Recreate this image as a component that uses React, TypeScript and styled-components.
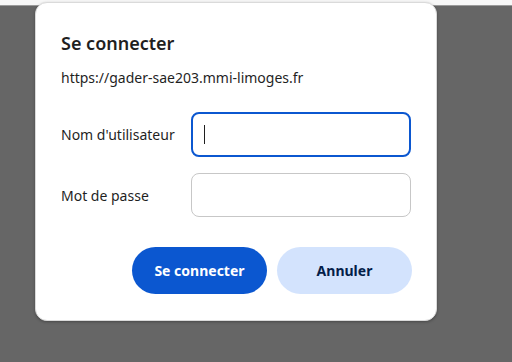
import React from 'react'
import styled, { createGlobalStyle } from 'styled-components'

const GlobalStyle = createGlobalStyle`
  html, body {
    margin: 0;
    padding: 0;
    background: #666666;
    font-family: "Noto Sans", "Open Sans", Arial, sans-serif;
  }
`

const Page = styled.div`
  position: relative;
  width: 512px;
  height: 362px;
  overflow: hidden;
  background: #666666;
`

const TopStrip = styled.div`
  height: 5px;
  background: #f7f7f7;
  border-bottom: 1px solid #9a9a9a;
`

const Dialog = styled.div`
  position: absolute;
  top: 2px;
  left: 35px;
  width: 402px;
  box-sizing: border-box;
  padding: 28px 24px 26px 25px;
  background: #ffffff;
  border: 1px solid #dadada;
  border-radius: 12px;
  box-shadow: 0 1px 3px rgba(0, 0, 0, 0.3);
  display: flex;
  flex-direction: column;
`

const Title = styled.h2`
  margin: 0;
  font-size: 18px;
  line-height: 24px;
  font-weight: 600;
  color: #1f1f1f;
`

const Origin = styled.p`
  margin: 13px 0 0;
  font-size: 14px;
  line-height: 20px;
  color: #1f1f1f;
`

const Form = styled.div`
  margin-top: 24px;
  display: flex;
  flex-direction: column;
  gap: 16px;
`

const Row = styled.div`
  display: flex;
  align-items: center;
`

const Label = styled.label`
  width: 130px;
  font-size: 14px;
  color: #1f1f1f;
`

const Field = styled.div<{ $focused?: boolean }>`
  width: 220px;
  height: ${p => (p.$focused ? '45px' : '44px')};
  box-sizing: border-box;
  display: flex;
  align-items: center;
  padding-left: ${p => (p.$focused ? '11px' : '12px')};
  border-radius: 8px;
  border: ${p => (p.$focused ? '2px solid #0b57d0' : '1px solid #c7c7c7')};
  background: #ffffff;
`

const Caret = styled.span`
  width: 1px;
  height: 19px;
  background: #1f1f1f;
`

const Actions = styled.div`
  margin-top: 30px;
  display: flex;
  justify-content: flex-end;
  gap: 10px;
`

const Button = styled.button<{ $primary?: boolean }>`
  width: 135px;
  height: 47px;
  border: none;
  border-radius: 24px;
  font-family: inherit;
  font-size: 14px;
  font-weight: 700;
  cursor: pointer;
  background: ${p => (p.$primary ? '#0b57d0' : '#d3e3fd')};
  color: ${p => (p.$primary ? '#ffffff' : '#041e49')};
`

export default function App() {
  return (
    <>
      <GlobalStyle />
      <Page>
        <TopStrip />
        <Dialog>
          <Title>Se connecter</Title>
          <Origin>https://gader-sae203.mmi-limoges.fr</Origin>
          <Form>
            <Row>
              <Label>Nom d'utilisateur</Label>
              <Field $focused>
                <Caret />
              </Field>
            </Row>
            <Row>
              <Label>Mot de passe</Label>
              <Field />
            </Row>
          </Form>
          <Actions>
            <Button $primary>Se connecter</Button>
            <Button>Annuler</Button>
          </Actions>
        </Dialog>
      </Page>
    </>
  )
}
